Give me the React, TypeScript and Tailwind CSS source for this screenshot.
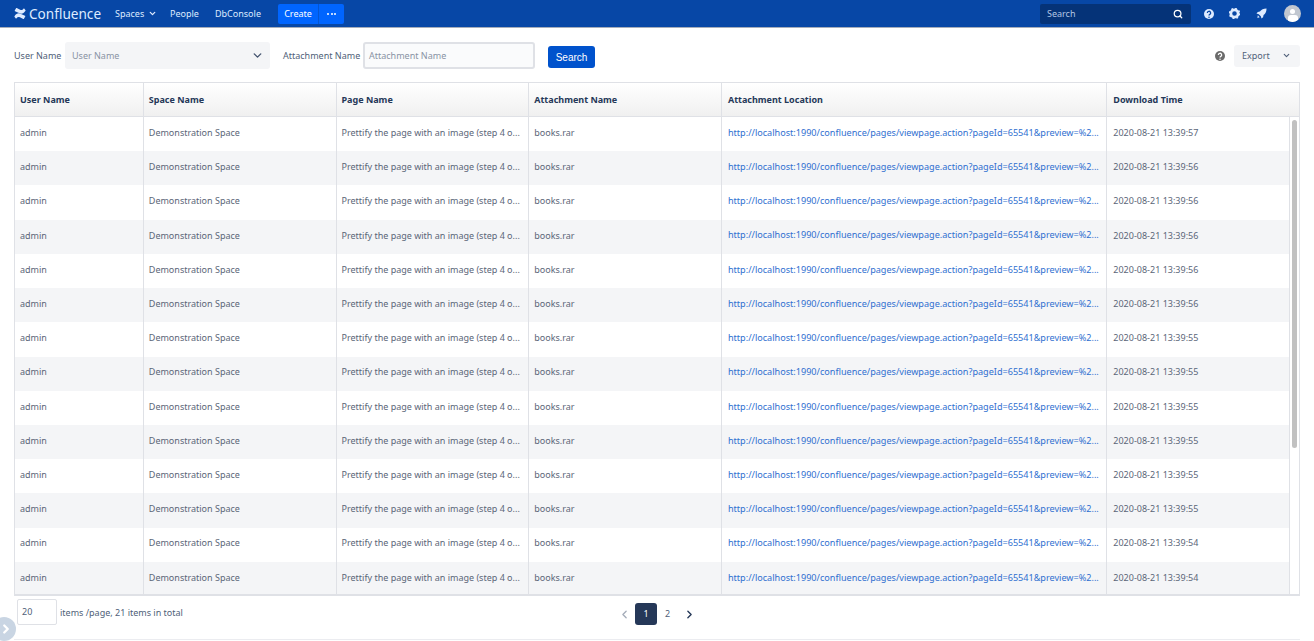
import { ChevronDown, ChevronLeft, ChevronRight, Search } from 'lucide-react';

const widths = ['w-[129px]', 'w-[193px]', 'w-[193px]', 'w-[193px]', 'w-[386px]', 'w-[192px]'];
const columns = ['User Name', 'Space Name', 'Page Name', 'Attachment Name', 'Attachment Location', 'Download Time'];

const times = ['57', '56', '56', '56', '56', '56', '55', '55', '55', '55', '55', '55', '54', '54'];

const Logo = () => (
  <svg width="12" height="11" viewBox="0 0 24 22" fill="#deebff">
    <path d="M1 16.500c4-6 8-7 13-4.600l8 3.800c.6.3.8.9.5 1.400l-2.600 4.300c-.3.5-.9.6-1.400.4l-6.700-3.200c-3-1.400-5-.6-6.700 2.100-.3.5-1 .7-1.500.4L1.300 18c-.5-.3-.6-1-.3-1.500z" />
    <path d="M23 5.500c-4 6-8 7-13 4.600l-8-3.800c-.6-.3-.8-.9-.5-1.400l2.600-4.300c.3-.5.9-.6 1.400-.4l6.700 3.200c3 1.400 5 .6 6.700-2.100.3-.5 1-.7 1.500-.4L22.700 4c.5.3.6 1 .3 1.500z" />
  </svg>
);

const Header = () => (
  <div className="flex h-[28px] items-center border-b border-b-[#a5adba] bg-[#0747a6] pl-[14px] pr-[13px] text-[9px] text-[#deebff]">
    <Logo />
    <span className="ml-[3px] w-[72px] text-[13.600px] leading-none text-[#deebff]">Confluence</span>
    <div className="ml-[14px] flex w-[42px] items-center justify-between">
      <span>Spaces</span>
      <ChevronDown size={9} strokeWidth={3.500} />
    </div>
    <span className="ml-[13px] w-[29px]">People</span>
    <span className="ml-[16px] w-[47px]">DbConsole</span>
    <div className="ml-[16px] flex h-[20px] overflow-hidden rounded-[2px] bg-[#0065ff] text-white">
      <span className="flex w-[41px] items-center justify-center border-r border-r-[#0747a6]/50">Create</span>
      <span className="flex w-[25px] items-center justify-center gap-[1.500px]">
        <i className="h-[2px] w-[2px] rounded-full bg-white" />
        <i className="h-[2px] w-[2px] rounded-full bg-white" />
        <i className="h-[2px] w-[2px] rounded-full bg-white" />
      </span>
    </div>
    <div className="ml-auto flex h-[20px] w-[151px] items-center justify-between rounded-[2px] bg-[#053378] pl-[7px] pr-[8px] text-[#b3c6e4]">
      <span>Search</span>
      <Search size={10} strokeWidth={3} className="text-white" />
    </div>
    <svg className="ml-[13px]" width="10" height="10" viewBox="0 0 24 24">
      <circle cx="12" cy="12" r="12" fill="#deebff" />
      <path d="M8 9.500a4 4 0 1 1 6 3.400c-1.300.8-2 1.300-2 2.600" fill="none" stroke="#0747a6" strokeWidth="3" />
      <circle cx="12" cy="19.500" r="1.800" fill="#0747a6" />
    </svg>
    <svg className="ml-[15px]" width="11" height="11" viewBox="0 0 24 24">
      <circle cx="12" cy="12" r="8" fill="none" stroke="#deebff" strokeWidth="6" />
      <circle cx="12" cy="12" r="11" fill="none" stroke="#deebff" strokeWidth="3" strokeDasharray="4 4.640" />
    </svg>
    <svg className="ml-[16px]" width="11" height="11" viewBox="0 0 24 24" fill="#deebff">
      <path d="M23 1c-7 0-11 2-14.500 6.500L4 8.500 1 12l5 1.500 4.500 4.500 1.500 5 3.500-3 1-4.500C20.500 12 23 8 23 1z" />
      <path d="M4 16l4 4-5 2z" />
    </svg>
    <div className="relative ml-[17px] h-[17px] w-[17px] overflow-hidden rounded-full bg-[#c1c7d0]">
      <div className="mx-auto mt-[4px] h-[5px] w-[5px] rounded-full bg-white" />
      <div className="mx-auto mt-[1px] h-[7px] w-[10px] rounded-t-[3px] bg-white" />
    </div>
  </div>
);

const Filters = () => (
  <div className="flex h-[54px] items-center whitespace-nowrap pl-[14px] pr-[14px] text-[9px] text-[#505f79]">
    <span className="mt-[1px] w-[47px]">User Name</span>
    <div className="ml-[4px] flex h-[27px] w-[205px] items-center justify-between rounded-[3px] bg-[#f4f5f7] pl-[7px] pr-[6px] pt-[1px] text-[#8993a4]">
      <span>User Name</span>
      <ChevronDown size={13} strokeWidth={2.500} className="text-[#42526e]" />
    </div>
    <span className="ml-[13px] mt-[1px] w-[78px]">Attachment Name</span>
    <div className="ml-[2px] flex h-[27px] w-[172px] items-center rounded-[3px] border-2 border-[#dfe1e6] bg-[#fafbfc] pl-[4px] pt-[1px] text-[#8993a4]">
      Attachment Name
    </div>
    <button className="ml-[13px] mt-[4px] h-[22px] w-[47px] rounded-[3px] bg-[#0052cc] text-center font-['Liberation_Sans',sans-serif] text-[10px] text-white">
      Search
    </button>
    <svg className="ml-auto mt-[1px]" width="10" height="10" viewBox="0 0 24 24">
      <circle cx="12" cy="12" r="12" fill="#6b6b6b" />
      <path d="M8 9.500a4 4 0 1 1 6 3.400c-1.300.8-2 1.300-2 2.600" fill="none" stroke="white" strokeWidth="3" />
      <circle cx="12" cy="19.500" r="1.800" fill="white" />
    </svg>
    <div className="ml-[9px] mt-[1px] flex h-[22px] w-[66px] items-center gap-[12px] rounded-[3px] bg-[#f4f5f7] pl-[8px]">
      <span>Export</span>
      <ChevronDown size={9} strokeWidth={3} />
    </div>
  </div>
);

const DataTable = () => (
  <div className="relative h-[514px] overflow-hidden border border-b-2 border-[#dfe1e6]">
    <div className="flex h-[34px] border-b border-b-[#dfe1e6] bg-gradient-to-b from-white to-[#f0f0f0] text-[9px] font-bold text-[#253858]">
      {columns.map((name, i) => (
        <div key={name} className={`${widths[i]} flex items-center border-r border-r-[#dfe1e6] px-[5px] last:border-r-0 last:pl-[6px] [&:nth-child(5)]:pl-[6px]`}>
          {name}
        </div>
      ))}
    </div>
    {times.map((sec, i) => (
      <div key={i} className={`flex h-[34.230px] whitespace-nowrap text-[9px] text-[#5b6678] ${i % 2 === 1 ? 'bg-[#f4f5f7]' : 'bg-white'}`}>
        <div className={`${widths[0]} flex items-center border-r border-r-[#dfe1e6] px-[5px] pb-[3px]`}>admin</div>
        <div className={`${widths[1]} flex items-center border-r border-r-[#dfe1e6] px-[5px] pb-[3px]`}>Demonstration Space</div>
        <div className={`${widths[2]} flex items-center border-r border-r-[#dfe1e6] px-[5px] pb-[3px]`}>Prettify the page with an image (step 4 o...</div>
        <div className={`${widths[3]} flex items-center border-r border-r-[#dfe1e6] px-[5px] pb-[3px]`}>books.rar</div>
        <div className={`${widths[4]} flex items-center border-r border-r-[#dfe1e6] pb-[3px] pl-[6px] text-[9.100px] text-[#2f6fd0]`}>
          http://localhost:1990/confluence/pages/viewpage.action?pageId=65541&amp;preview=%2...
        </div>
        <div className={`${widths[5]} flex items-center pb-[3px] pl-[6px]`}>2020-08-21 13:39:{sec}</div>
      </div>
    ))}
    {/* scrollbar */}
    <div className="absolute bottom-0 right-0 top-[34px] w-[10px] border-l border-l-[#dfe1e6] bg-white">
      <div className="mx-auto mt-[3px] h-[328px] w-[5px] rounded-[3px] bg-[#c1c1c1]" />
    </div>
  </div>
);

const Pagination = () => (
  <div className="relative flex h-[44px] items-start border-b border-b-[#ebecf0] text-[9px] text-[#505f79]">
    <div className="ml-[3px] mt-[3px] flex h-[26px] w-[40px] items-center rounded-[2px] border border-[#dfe1e6] pl-[4px]">20</div>
    <span className="ml-[3px] mt-[10px]">items /page, 21 items in total</span>
    <div className="absolute left-[604px] top-[7px] flex items-center">
      <ChevronLeft size={13} strokeWidth={2.500} className="text-[#a5adba]" />
      <span className="ml-[4px] flex h-[22px] w-[22px] items-center justify-center rounded-[3px] bg-[#253858] text-white">1</span>
      <span className="ml-[8px]">2</span>
      <ChevronRight size={13} strokeWidth={2.500} className="ml-[13px] text-[#253858]" />
    </div>
  </div>
);

export default function App() {
  return (
    <div className="relative h-[641px] w-[1314px] overflow-hidden bg-white font-['Noto_Sans','Open_Sans',sans-serif]">
      <Header />
      <Filters />
      <div className="pl-[14px] pr-[14px]">
        <DataTable />
        <Pagination />
      </div>
      <div className="absolute bottom-0 left-[-8px] flex h-[24px] w-[24px] items-center justify-end rounded-full bg-[#c9d5e3] pr-[3px] text-white">
        <ChevronRight size={14} strokeWidth={4} />
      </div>
    </div>
  );
}
